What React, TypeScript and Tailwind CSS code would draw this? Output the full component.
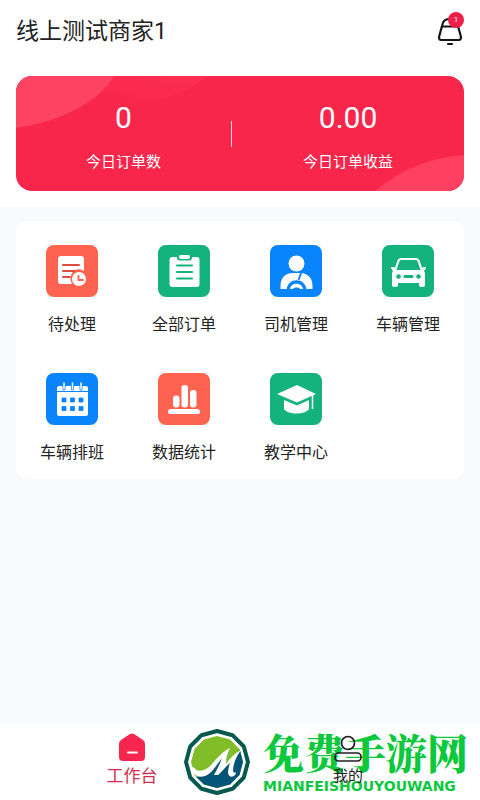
import type { ReactNode } from "react";

const menus: { label: string; color: string; icon: ReactNode }[] = [
  {
    label: "待处理",
    color: "bg-[#fd6350]",
    icon: (
      <>
        <path
          d="M15 11h20a3 3 0 0 1 3 3v12a8 8 0 0 0-10 13H15a3 3 0 0 1-3-3V14a3 3 0 0 1 3-3z"
          fill="#fff"
        />
        <path d="M17 20h16M17 26h12M17 32h7" stroke="#e04a40" strokeWidth="2" strokeLinecap="round" />
        <circle cx="33" cy="34" r="8.500" fill="#fd6350" />
        <circle cx="33" cy="34" r="7" fill="#fff" />
        <path d="M32.500 30v5h5" stroke="#fd6350" strokeWidth="1.800" fill="none" />
      </>
    ),
  },
  {
    label: "全部订单",
    color: "bg-[#14b37d]",
    icon: (
      <>
        <rect x="11.500" y="12" width="30" height="30" rx="3" fill="#fff" />
        <rect x="19" y="8" width="15" height="7.500" rx="3" fill="#14b37d" />
        <rect x="21" y="10" width="11" height="4" rx="2" fill="#fff" />
        <path d="M19 20.500h15M19 27h15M19 33.500h15" stroke="#14b37d" strokeWidth="2" strokeLinecap="round" />
      </>
    ),
  },
  {
    label: "司机管理",
    color: "bg-[#0a84fb]",
    icon: (
      <>
        <circle cx="26.500" cy="18.500" r="8" fill="#fff" />
        <path d="M10.500 44V41c0-8 5-13 12-13h8c7 0 12 5 12 13v3z" fill="#fff" />
        <path d="M16.500 45c1-13 19-13 20 0z" fill="#0a84fb" />
        <path d="M31.500 27l-3 8" stroke="#0a84fb" strokeWidth="2" />
        <path d="M20 44c1-7 12-7 13 0h-3c-1-2-6-2-7 0z" fill="#fff" />
      </>
    ),
  },
  {
    label: "车辆管理",
    color: "bg-[#14b37d]",
    icon: (
      <>
        <path
          d="M13 26l3-9q1-3 3-3h15q2 0 3 3l3 9"
          fill="none"
          stroke="#fff"
          strokeWidth="2.200"
          strokeLinejoin="round"
        />
        <path
          d="M9 22h3l2 3h25l2-3h3q0 2-2 4 1 1 1 3v11a2 2 0 0 1-2 2h-2a2 2 0 0 1-2-2v-2H16v2a2 2 0 0 1-2 2h-2a2 2 0 0 1-2-2V29q0-2 1-3-2-2-2-4z"
          fill="#fff"
        />
        <circle cx="16.500" cy="31.500" r="2.300" fill="#14b37d" />
        <circle cx="36.500" cy="31.500" r="2.300" fill="#14b37d" />
        <path d="M23 31.500h7" stroke="#14b37d" strokeWidth="3" strokeLinecap="round" />
      </>
    ),
  },
  {
    label: "车辆排班",
    color: "bg-[#0a84fb]",
    icon: (
      <>
        <path d="M11 18v-3a2 2 0 0 1 2-2h27a2 2 0 0 1 2 2v3z" fill="#fff" />
        <path d="M11 19h31V41a2 2 0 0 1-2 2H13a2 2 0 0 1-2-2z" fill="#fff" />
        <path
          d="M18 10v6M26.500 10v6M35 10v6"
          stroke="#0a84fb"
          strokeWidth="3"
          strokeLinecap="round"
        />
        <path d="M18 10v6M26.500 10v6M35 10v6" stroke="#fff" strokeWidth="1.500" strokeLinecap="round" />
        <path
          d="M16 25h4v4h-4zM24.500 25h4v4h-4zM33 25h4v4h-4zM16 33.500h4v4h-4zM24.500 33.500h4v4h-4zM33 33.500h4v4h-4z"
          fill="#0a84fb"
          stroke="#0a84fb"
          strokeWidth="0.800"
        />
      </>
    ),
  },
  {
    label: "数据统计",
    color: "bg-[#fd6350]",
    icon: (
      <>
        <rect x="15" y="22.500" width="6.500" height="12" rx="3" fill="#fff" />
        <rect x="23.500" y="12" width="6.500" height="22.500" rx="3" fill="#fff" />
        <rect x="32" y="17" width="6.500" height="17.500" rx="3" fill="#fff" />
        <rect x="10" y="36" width="32" height="5" rx="2.500" fill="#fff" />
      </>
    ),
  },
  {
    label: "教学中心",
    color: "bg-[#14b37d]",
    icon: (
      <>
        <path d="M7 21l20-9 19 9-19 8.500z" fill="#fff" />
        <path d="M14 27l13 5.500L39 27v9c-4 6-21 6-25 0z" fill="#fff" />
        <path d="M42.500 22v14" stroke="#fff" strokeWidth="1.500" />
      </>
    ),
  },
];

function Header() {
  return (
    <header className="flex h-16 items-center justify-between px-4">
      <h1 className="text-[23px]">线上测试商家1</h1>
      <button type="button" aria-label="消息" className="relative h-10 w-7">
        <svg viewBox="0 0 28 40" className="h-10 w-7" fill="none">
          <path
            d="M6 14q1-7 7-7h2q6 0 7 7l3 11q0 3-2 3H5q-2 0-2-3z"
            stroke="#151515"
            strokeWidth="2.200"
            strokeLinejoin="round"
          />
          <path d="M6 14.500h16" stroke="#151515" strokeWidth="2" />
          <path d="M12 32h4" stroke="#151515" strokeWidth="2.200" strokeLinecap="round" />
        </svg>
        <span className="absolute top-0 right-0 flex h-4 w-4 items-center justify-center rounded-full bg-[#ec2048] text-[8px] text-white">
          1
        </span>
      </button>
    </header>
  );
}

function Summary() {
  return (
    <section className="relative mx-4 mt-3 flex h-[115px] items-center overflow-hidden rounded-2xl bg-[#f7264a] text-white">
      <svg viewBox="0 0 448 115" preserveAspectRatio="none" className="absolute inset-0 h-full w-full">
        <defs>
          <linearGradient id="fade" x1="1" y1="0" x2="0.200" y2="0.600">
            <stop offset="0" stopColor="#fc3050" />
            <stop offset="1" stopColor="#f7264a" />
          </linearGradient>
        </defs>
        <path d="M0 0H192C165 22 120 35 62 33z" fill="url(#fade)" />
        <path d="M0 0H98C83 25 48 45 0 52z" fill="#ff4363" />
        <path d="M359 115C384 94 412 82 448 79V115z" fill="#ff4060" />
      </svg>
      <div className="relative w-[48%] pt-1 text-center">
        <p className="text-[30px] leading-10">0</p>
        <p className="mt-3 text-[15px] leading-6">今日订单数</p>
      </div>
      <div className="relative h-[26px] w-px bg-white/80" />
      <div className="relative flex-1 pt-1 text-center">
        <p className="text-[30px] leading-10">0.00</p>
        <p className="mt-3 text-[15px] leading-6">今日订单收益</p>
      </div>
    </section>
  );
}

function Watermark() {
  return (
    <div className="pointer-events-none absolute top-1 right-3 flex items-center gap-3">
      <svg viewBox="0 0 68 68" className="h-[68px] w-[68px]">
        <path
          d="M65 34L60.800 49.500 49.500 60.800 34 65 18.500 60.800 7.200 49.500 3 34 7.200 18.500 18.500 7.200 34 3 49.500 7.200 60.800 18.500z"
          fill="#fff"
          stroke="#07594f"
          strokeWidth="4"
          strokeLinejoin="round"
        />
        <path
          d="M60 34L56.500 47 47 56.500 34 60 21 56.500 11.500 47 8 34 11.500 21 21 11.500 34 8 47 11.500 56.500 21z"
          fill="#80bd28"
        />
        <path
          d="M57 22L60 34 56.500 47 47 56.500 34 60 21 56.500 13 49Q26 48 33 37L45 24 42 37z"
          fill="#045477"
        />
        <path
          d="M8 39q4 0 5 3c5 2 11 0 16-6 6-7 10-12 18-16-3 6-4 11-4 16 4-6 9-11 15-14-5 7-8 14-8 21q1 3 3 1c0 5-7 7-8 1 0-4 1-7 2-10-4 3-8 9-12 12h-4c3-6 6-11 8-17-6 7-9 15-17 18-6 2-12 0-14-9z"
          fill="#fff"
        />
      </svg>
      <div className="text-[#0bc83d]">
        <p className="font-['Noto_Serif_CJK_SC','Noto_Sans_CJK_SC',serif] text-[41px] leading-11 font-black">
          免费手游网
        </p>
        <p className="mt-1 font-['DejaVu_Sans',sans-serif] text-[14px] leading-4 font-bold">MIANFEISHOUYOUWANG</p>
      </div>
    </div>
  );
}

function TabBar() {
  return (
    <nav className="relative grid h-[76px] grid-cols-2 bg-white px-6">
      <Watermark />
      <button type="button" className="relative flex flex-col items-center pt-2 text-[17px] text-[#d62b50]">
        <svg viewBox="0 0 28 30" className="h-[30px] w-7">
          <path
            d="M12 2q2-1 4 0l9 6q2 1 2 4v13q0 4-4 4H5q-4 0-4-4V12q0-3 2-4z"
            fill="#f7264e"
          />
          <path d="M10 20.500h9" stroke="#fff" strokeWidth="2" strokeLinecap="round" />
        </svg>
        <span className="mt-1 leading-5">工作台</span>
      </button>
      <button type="button" className="relative flex flex-col items-center pt-2 text-[15px]">
        <svg viewBox="0 0 28 30" className="h-[30px] w-7" fill="none" stroke="#202020" strokeWidth="1.700">
          <circle cx="14" cy="11" r="6.500" />
          <rect x="1" y="21" width="26" height="8" rx="3.500" />
        </svg>
        <span className="mt-1 leading-5">我的</span>
      </button>
    </nav>
  );
}

function App() {
  return (
    <div className="flex min-h-screen flex-col bg-[#f9fafe] font-[Roboto,'Noto_Sans_CJK_SC',sans-serif] text-[#222]">
      <div className="bg-white pb-4">
        <Header />
        <Summary />
      </div>
      <main className="flex-1 px-4 pt-[14px]">
        <div className="grid grid-cols-4 gap-y-9 rounded-xl bg-white pt-6 pb-[14px]">
          {menus.map((menu) => (
            <button key={menu.label} type="button" className="flex flex-col items-center gap-4">
              <span className={`h-[52px] w-[52px] rounded-lg ${menu.color}`}>
                <svg viewBox="0 0 52 52" className="h-full w-full" fill="none">
                  {menu.icon}
                </svg>
              </span>
              <span className="text-[16px] leading-6">{menu.label}</span>
            </button>
          ))}
        </div>
      </main>
      <TabBar />
    </div>
  );
}

export default App;
